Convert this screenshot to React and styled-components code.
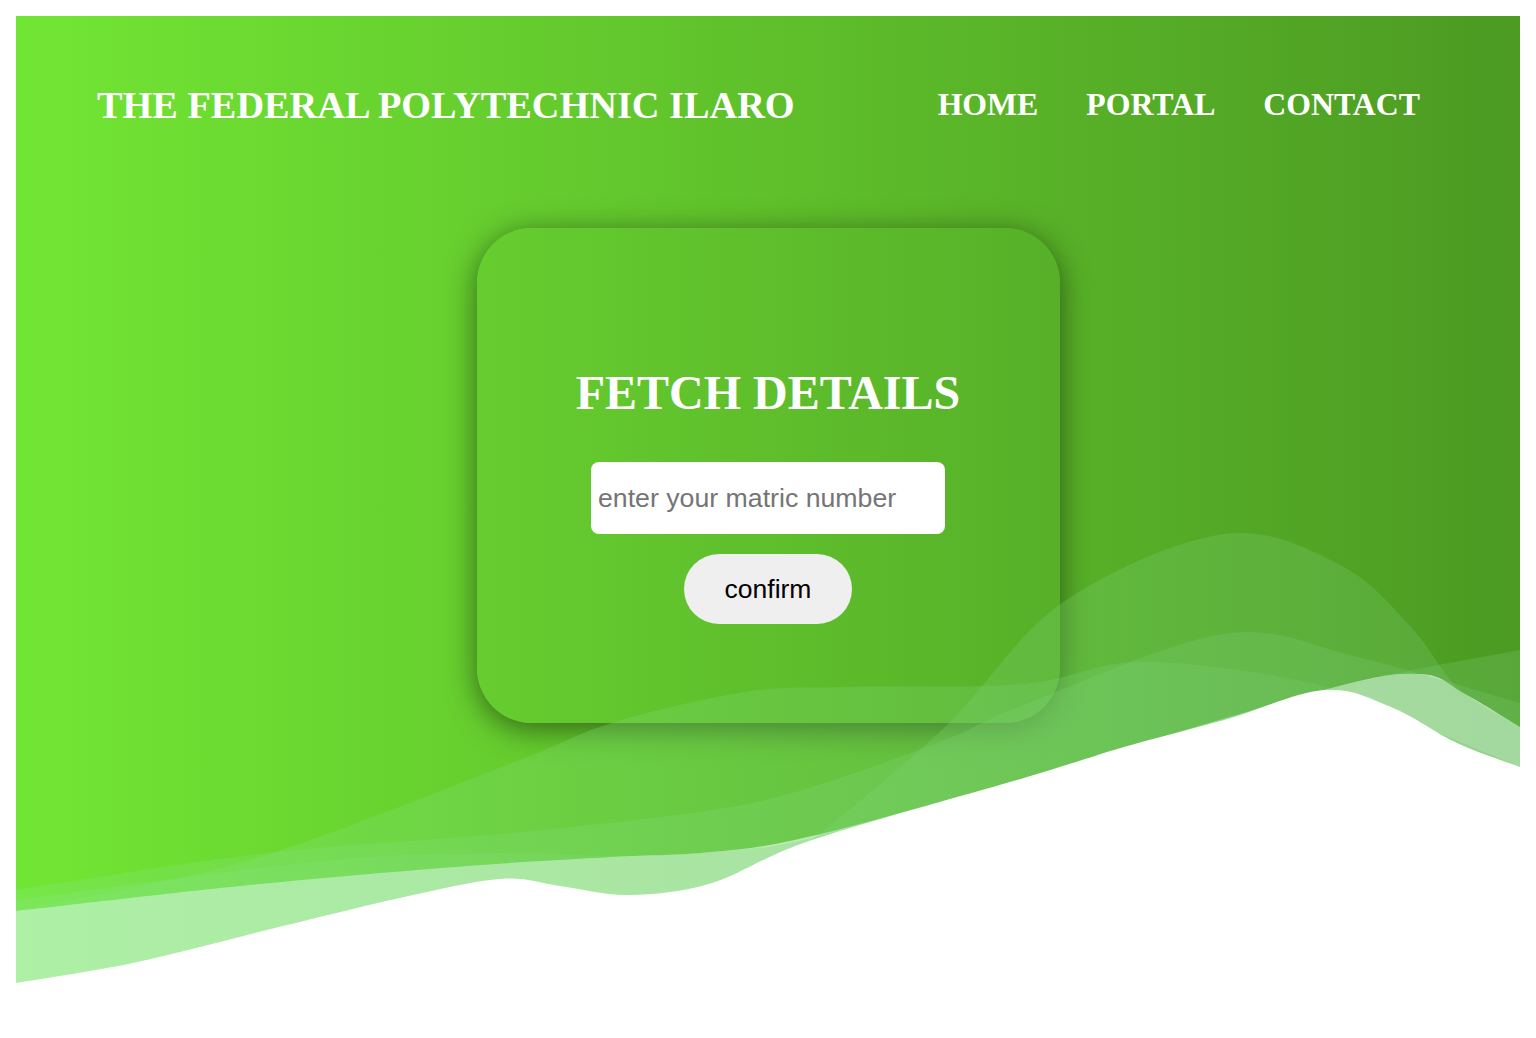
import React from 'react';
import styled, { createGlobalStyle } from 'styled-components';

const GlobalStyle = createGlobalStyle`
  body {
    margin: 16px;
    background: #fff;
    font-family: "Liberation Serif", "Times New Roman", serif;
  }
`;

// page coordinates, the svg viewBox uses the same ones
const BOTTOM = 986;

const smooth = pts => {
  let d = `M${pts[0][0]},${pts[0][1]}`;
  for (let i = 0; i < pts.length - 1; i++) {
    const p0 = pts[i - 1] || pts[i];
    const p1 = pts[i];
    const p2 = pts[i + 1];
    const p3 = pts[i + 2] || p2;
    const c1x = p1[0] + (p2[0] - p0[0]) / 6;
    const c1y = p1[1] + (p2[1] - p0[1]) / 6;
    const c2x = p2[0] - (p3[0] - p1[0]) / 6;
    const c2y = p2[1] - (p3[1] - p1[1]) / 6;
    d += ` C${c1x.toFixed(1)},${c1y.toFixed(1)} ${c2x.toFixed(1)},${c2y.toFixed(1)} ${p2[0]},${p2[1]}`;
  }
  return d;
};

const area = pts => `${smooth(pts)} L1520,${BOTTOM} L16,${BOTTOM} Z`;

const base = [
  [16, 911], [250, 885], [467, 866], [612, 857], [712, 852], [812, 836],
  [1024, 778], [1324, 690], [1420, 674], [1465, 694], [1520, 727],
];

const hump1 = [
  [16, 890], [267, 853], [512, 833], [712, 810], [812, 787], [945, 740],
  [1024, 705], [1224, 634], [1357, 657], [1520, 703],
];

const hump2 = [
  [16, 910], [250, 860], [512, 763], [612, 723], [745, 692], [845, 687],
  [1024, 684], [1141, 662], [1311, 683], [1424, 727], [1520, 767],
];

const arch = [
  [520, 1000], [700, 925], [812, 840], [945, 727], [1062, 603], [1224, 534],
  [1340, 565], [1411, 627], [1457, 687], [1520, 727],
];

const dip = [
  [16, 900], [333, 860], [512, 853], [612, 856], [712, 852], [812, 838],
  [1024, 778], [1324, 690], [1520, 650],
];

const edge = [
  [16, 983], [133, 963], [267, 930], [400, 898], [500, 879], [560, 886],
  [629, 895], [712, 883], [812, 840], [1024, 778], [1124, 747], [1224, 720],
  [1324, 690], [1391, 707], [1457, 743], [1520, 767],
];

const Hero = styled.section`
  position: relative;
  height: 970px;
  display: flex;
  flex-direction: column;
  align-items: center;
  background: linear-gradient(to right, #72e634, #4c9a22);
`;

const Header = styled.header`
  align-self: stretch;
  height: 178px;
  display: flex;
  align-items: center;
  justify-content: space-between;
  padding: 0 100px 0 81px;
`;

const Brand = styled.h1`
  margin: 0;
  font-size: 38.3px;
  font-weight: bold;
  color: #fff;
`;

const Nav = styled.nav`
  display: flex;
  gap: 48px;
`;

const NavLink = styled.a`
  font-size: 31.8px;
  font-weight: bold;
  color: #fff;
  text-decoration: none;
`;

const Card = styled.div`
  width: 583px;
  height: 495px;
  box-sizing: border-box;
  margin-top: 34px;
  padding-top: 137px;
  display: flex;
  flex-direction: column;
  align-items: center;
  border-radius: 55px;
  background: linear-gradient(to right, #66cd2f, #57b028);
  box-shadow: 0 6px 30px rgba(0, 0, 0, 0.5);
`;

const Title = styled.h2`
  margin: 0 0 42px;
  font-size: 48px;
  font-weight: bold;
  color: #fff;
`;

const MatricInput = styled.input`
  width: 354px;
  height: 72px;
  box-sizing: border-box;
  padding: 0 7px;
  border: none;
  border-radius: 8px;
  background: #fff;
  font-family: "Liberation Sans", Arial, sans-serif;
  font-size: 26.7px;
  outline: none;

  &::placeholder {
    color: #757575;
  }
`;

const ConfirmButton = styled.button`
  margin-top: 20px;
  width: 168px;
  height: 70px;
  border: none;
  border-radius: 35px;
  background: #efefef;
  color: #000;
  font-family: "Liberation Sans", Arial, sans-serif;
  font-size: 26.5px;
`;

const Waves = styled.svg`
  position: absolute;
  left: 0;
  bottom: 0;
  width: 100%;
  height: 486px;
  pointer-events: none;
`;

const App = () => (
  <>
    <GlobalStyle />
    <Hero>
      <Header>
        <Brand>THE FEDERAL POLYTECHNIC ILARO</Brand>
        <Nav>
          <NavLink href="#">HOME</NavLink>
          <NavLink href="#">PORTAL</NavLink>
          <NavLink href="#">CONTACT</NavLink>
        </Nav>
      </Header>

      <Card>
        <Title>FETCH DETAILS</Title>
        <MatricInput type="text" placeholder="enter your matric number" />
        <ConfirmButton type="button">confirm</ConfirmButton>
      </Card>

      <Waves viewBox={`16 500 1504 ${BOTTOM - 500}`} preserveAspectRatio="none">
        <defs>
          <linearGradient id="wave" x1="0" x2="1" y1="0" y2="0">
            <stop offset="0" stopColor="#84e878" />
            <stop offset="1" stopColor="#74c46c" />
          </linearGradient>
        </defs>
        <path d={area(base)} fill="#fff" />
        <path d={area(hump1)} fill="url(#wave)" fillOpacity="0.3" />
        <path d={area(hump2)} fill="url(#wave)" fillOpacity="0.3" />
        <path d={area(dip)} fill="url(#wave)" fillOpacity="0.3" />
        <path d={area(arch)} fill="url(#wave)" fillOpacity="0.3" />
        <path d={area(edge)} fill="#fff" />
      </Waves>
    </Hero>
  </>
);

export default App;
